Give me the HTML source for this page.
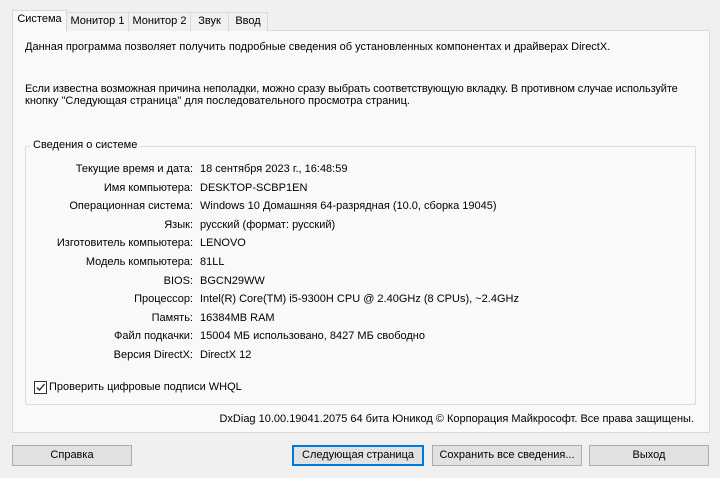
<!DOCTYPE html><html><head><meta charset="utf-8"><style>
body{margin:0;width:720px;height:478px;background:#f0f0f0;font-family:"Liberation Sans",sans-serif;font-size:11px;color:#000;position:relative;overflow:hidden}
.a{position:absolute;white-space:nowrap}
.tab{position:absolute;top:12px;height:18px;border:1px solid #d9d9d9;border-bottom:none;background:#f0f0f0;line-height:17px;text-align:center}
.panel{position:absolute;left:12px;top:30px;width:696px;height:401px;background:#f9f9f9;border:1px solid #d9d9d9}
.grp{position:absolute;left:25px;top:146px;width:669px;height:257px;border:1px solid #dcdcdc;border-radius:2px}
.l{position:absolute;right:527px;white-space:nowrap}
.v{position:absolute;left:200px;white-space:nowrap}
.btn{position:absolute;top:445px;height:19px;background:#e1e1e1;border:1px solid #adadad;text-align:center;line-height:19px}
</style></head><body>
<div class="panel"></div>
<div class="tab" style="left:12px;top:10px;height:21px;width:53px;background:#f9f9f9;z-index:2">Система</div>
<div class="tab" style="left:66px;width:61px">Монитор 1</div>
<div class="tab" style="left:128px;width:61px">Монитор 2</div>
<div class="tab" style="left:190px;width:37px">Звук</div>
<div class="tab" style="left:228px;width:38px">Ввод</div>
<div class="a" style="left:25px;top:41px">Данная программа позволяет получить подробные сведения об установленных компонентах и драйверах DirectX.</div>
<div class="a" style="left:25px;top:83px;letter-spacing:-0.1px">Если известна возможная причина неполадки, можно сразу выбрать соответствующую вкладку. В противном случае используйте</div>
<div class="a" style="left:25px;top:95px">кнопку "Следующая страница" для последовательного просмотра страниц.</div>
<div class="grp"></div>
<div class="a" style="left:30px;top:139px;background:#f9f9f9;padding:0 3px">Сведения о системе</div>
<div style="position:absolute;left:0;top:163px;width:720px">
<div class="l" style="top:0">Текущие время и дата:</div><div class="v" style="top:0">18 сентября 2023 г., 16:48:59</div>
<div class="l" style="top:18.6px">Имя компьютера:</div><div class="v" style="top:18.6px">DESKTOP-SCBP1EN</div>
<div class="l" style="top:37.2px">Операционная система:</div><div class="v" style="top:37.2px">Windows 10 Домашняя 64-разрядная (10.0, сборка 19045)</div>
<div class="l" style="top:55.8px">Язык:</div><div class="v" style="top:55.8px">русский (формат: русский)</div>
<div class="l" style="top:74.4px">Изготовитель компьютера:</div><div class="v" style="top:74.4px">LENOVO</div>
<div class="l" style="top:93px">Модель компьютера:</div><div class="v" style="top:93px">81LL</div>
<div class="l" style="top:111.6px">BIOS:</div><div class="v" style="top:111.6px">BGCN29WW</div>
<div class="l" style="top:130.2px">Процессор:</div><div class="v" style="top:130.2px">Intel(R) Core(TM) i5-9300H CPU @ 2.40GHz (8 CPUs), ~2.4GHz</div>
<div class="l" style="top:148.8px">Память:</div><div class="v" style="top:148.8px">16384MB RAM</div>
<div class="l" style="top:167.4px">Файл подкачки:</div><div class="v" style="top:167.4px">15004 МБ использовано, 8427 МБ свободно</div>
<div class="l" style="top:186px">Версия DirectX:</div><div class="v" style="top:186px">DirectX 12</div>
</div>
<div style="position:absolute;left:34px;top:381px;width:11px;height:11px;border:1px solid #333;background:#fff"><svg width="11" height="11" style="position:absolute;left:0;top:0"><path d="M2 5.5L4.5 8L9.5 2" stroke="#222" stroke-width="1.3" fill="none"/></svg></div>
<div class="a" style="left:49px;top:381px">Проверить цифровые подписи WHQL</div>
<div class="a" style="right:26px;top:413px">DxDiag 10.00.19041.2075 64 бита Юникод © Корпорация Майкрософт. Все права защищены.</div>
<div class="btn" style="left:12px;width:118px">Справка</div>
<div class="btn" style="left:292px;width:130px;border:1px solid #0078d7;box-shadow:inset 0 0 0 1px #0078d7">Следующая страница</div>
<div class="btn" style="left:432px;width:148px">Сохранить все сведения...</div>
<div class="btn" style="left:589px;width:118px">Выход</div>
</body></html>
